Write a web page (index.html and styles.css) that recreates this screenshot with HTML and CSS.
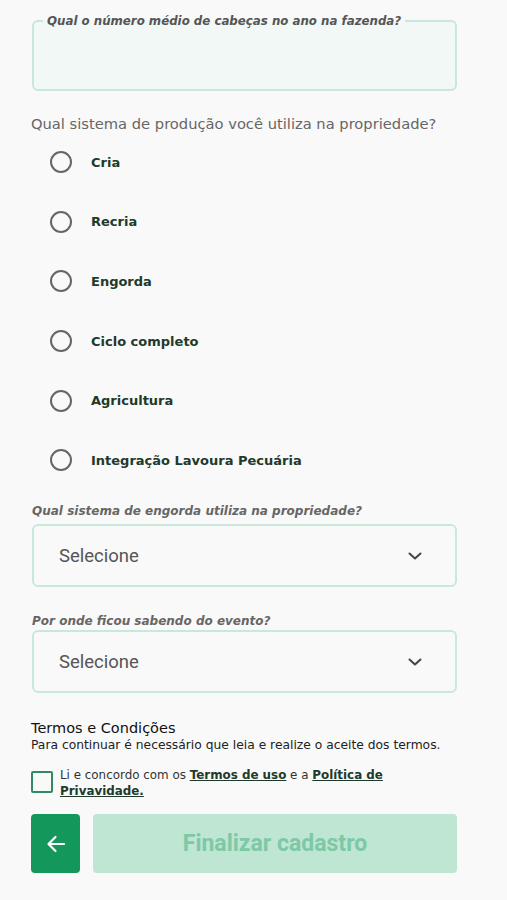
FILE: index.html
```html
<!DOCTYPE html>
<html lang="pt-BR">
<head>
  <meta charset="UTF-8">
  <title>Cadastro</title>
  <meta name="viewport" content="width=device-width, initial-scale=1">
  <link rel="stylesheet" href="styles.css">
</head>
<body>
  <form class="form">

    <fieldset class="field-outline">
      <legend>Qual o número médio de cabeças no ano na fazenda?</legend>
      <input type="text" class="field-input">
    </fieldset>

    <p class="question">Qual sistema de produção você utiliza na propriedade?</p>

    <div class="radio-list">
      <label class="radio-row"><span class="radio"></span>Cria</label>
      <label class="radio-row"><span class="radio"></span>Recria</label>
      <label class="radio-row"><span class="radio"></span>Engorda</label>
      <label class="radio-row"><span class="radio"></span>Ciclo completo</label>
      <label class="radio-row"><span class="radio"></span>Agricultura</label>
      <label class="radio-row"><span class="radio"></span>Integração Lavoura Pecuária</label>
    </div>

    <p class="select-label first">Qual sistema de engorda utiliza na propriedade?</p>
    <div class="select">
      <span>Selecione</span>
      <svg width="14" height="8" viewBox="0 0 14 8"><path d="M1.5 1.5 L7 6.5 L12.5 1.5" fill="none" stroke="#444" stroke-width="2" stroke-linecap="round" stroke-linejoin="round"/></svg>
    </div>

    <p class="select-label">Por onde ficou sabendo do evento?</p>
    <div class="select">
      <span>Selecione</span>
      <svg width="14" height="8" viewBox="0 0 14 8"><path d="M1.5 1.5 L7 6.5 L12.5 1.5" fill="none" stroke="#444" stroke-width="2" stroke-linecap="round" stroke-linejoin="round"/></svg>
    </div>

    <h3 class="terms-title">Termos e Condições</h3>
    <p class="terms-text">Para continuar é necessário que leia e realize o aceite dos termos.</p>

    <div class="check-row">
      <span class="checkbox"></span>
      <p>Li e concordo com os <a href="#">Termos de uso</a> e a <a href="#">Política de</a><br><a href="#">Privavidade.</a></p>
    </div>

    <div class="actions">
      <button type="button" class="btn-back">
        <svg width="20" height="18" viewBox="0 0 20 18"><path d="M18 9 H3 M9.5 2 L2.5 9 L9.5 16" fill="none" stroke="#fff" stroke-width="2.2" stroke-linecap="round" stroke-linejoin="round"/></svg>
      </button>
      <button type="button" class="btn-finish" disabled>Finalizar cadastro</button>
    </div>

  </form>
</body>
</html>
```

FILE: styles.css
```css
body {
  margin: 0;
  background: #f9f9f9;
  font-family: 'DejaVu Sans', sans-serif;
  color: #333;
}

.form {
  width: 426px;
  padding: 14px 0 0 31px;
}

.field-outline {
  margin: 0 0 0 1px;
  padding: 0 9px;
  border: 2px solid #c9e8dc;
  border-radius: 6px;
  background: #f2f8f5;
}

.field-outline legend {
  padding: 0 4px;
  font-size: 11.8px;
  line-height: 14px;
  font-weight: bold;
  font-style: italic;
  color: #555;
}

.field-input {
  display: block;
  width: 100%;
  height: 59px;
  border: none;
  background: transparent;
}

.question {
  margin: 23px 0 0;
  font-size: 14.7px;
  line-height: 20px;
  color: #666;
}

.radio-list {
  display: flex;
  flex-direction: column;
  gap: 19.7px;
  margin-top: 8px;
}

.radio-row {
  display: flex;
  align-items: center;
  height: 40px;
  padding-left: 19px;
  font-size: 13px;
  font-weight: bold;
  color: #1e3a2c;
}

.radio {
  width: 18px;
  height: 18px;
  border: 2px solid #666;
  border-radius: 50%;
  margin-right: 19px;
}

.select-label {
  margin: 23px 0 0 1px;
  font-size: 12px;
  line-height: 16px;
  font-weight: bold;
  font-style: italic;
  color: #666;
}

.select-label + .select {
  margin-top: 5px;
}

.select-label:not(.first) {
  margin-top: 26px;
}

.select-label:not(.first) + .select {
  margin-top: 1px;
}

.select {
  display: flex;
  align-items: center;
  justify-content: space-between;
  box-sizing: border-box;
  height: 63px;
  margin-left: 1px;
  padding: 0 33px 0 25px;
  border: 2px solid #c9e8dc;
  border-radius: 6px;
  font-family: Roboto, sans-serif;
  font-size: 18.5px;
  color: #555;
}

.terms-title {
  margin: 26px 0 0;
  font-size: 14.5px;
  line-height: 18px;
  font-weight: normal;
  color: #111;
}

.terms-text {
  margin: 1px 0 0;
  font-size: 12.3px;
  line-height: 14px;
  color: #222;
}

.check-row {
  display: flex;
  align-items: flex-start;
  margin-top: 15px;
}

.checkbox {
  flex: none;
  width: 18px;
  height: 18px;
  margin-top: 4px;
  border: 2px solid #2e8b63;
  border-radius: 2px;
}

.check-row p {
  margin: 0 0 0 7px;
  font-size: 11.9px;
  line-height: 16px;
  color: #333;
}

.check-row a {
  color: #1e3a2c;
  font-weight: bold;
}

.actions {
  display: flex;
  gap: 13px;
  margin-top: 15px;
}

.btn-back {
  display: flex;
  align-items: center;
  justify-content: center;
  width: 49px;
  height: 59px;
  border: none;
  border-radius: 4px;
  background: #14975a;
}

.btn-finish {
  flex: 1;
  height: 59px;
  border: none;
  border-radius: 4px;
  background: #bfe5d3;
  font-family: Roboto, sans-serif;
  font-size: 23px;
  font-weight: bold;
  color: #7dc9a5;
}
```
